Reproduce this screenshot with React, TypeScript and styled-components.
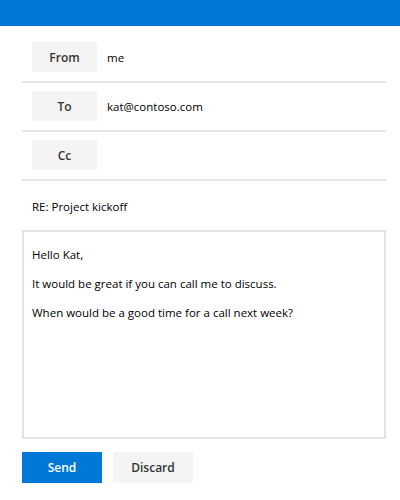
import React from 'react';
import styled, { createGlobalStyle } from 'styled-components';

const GlobalStyle = createGlobalStyle`
  body {
    margin: 0;
    background: #ffffff;
    font-family: 'Open Sans', 'Noto Sans', sans-serif;
    color: #000000;
  }
`;

const Page = styled.div`
  width: 400px;
  height: 500px;
  display: flex;
  flex-direction: column;
  background: #ffffff;
`;

const TopBar = styled.div`
  height: 26px;
  background: #0078d7;
  flex-shrink: 0;
`;

const Form = styled.form`
  display: flex;
  flex-direction: column;
  padding: 8px 14px 0 22px;
`;

const FieldRow = styled.div`
  display: flex;
  align-items: center;
  gap: 10px;
  padding: 8px 0 9px 10px;
  border-bottom: 2px solid #e6e6e6;
`;

const FieldLabel = styled.button`
  width: 65px;
  height: 30px;
  border: none;
  background: #f4f4f4;
  font-family: inherit;
  font-size: 12px;
  font-weight: 600;
  color: #333333;
  padding: 0;
`;

const FieldValue = styled.span`
  font-size: 11.5px;
  color: #000000;
`;

const Subject = styled.div`
  padding: 17px 10px 14px;
  font-size: 11.5px;
  line-height: 18px;
`;

const Body = styled.div`
  height: 209px;
  border: 2px solid #e3e3e3;
  padding: 14px 8px;
  box-sizing: border-box;
  display: flex;
  flex-direction: column;
  gap: 11px;
`;

const Para = styled.p`
  margin: 0;
  font-size: 11.5px;
  line-height: 18px;
`;

const Actions = styled.div`
  display: flex;
  gap: 11px;
  margin-top: 13px;
`;

const ActionButton = styled.button<{ $primary?: boolean }>`
  width: 80px;
  height: 31px;
  border: none;
  padding: 0;
  font-family: inherit;
  font-size: 12px;
  font-weight: 600;
  background: ${(p) => (p.$primary ? '#0078d7' : '#f4f4f4')};
  color: ${(p) => (p.$primary ? '#ffffff' : '#333333')};
`;

const fields = [
  { label: 'From', value: 'me' },
  { label: 'To', value: 'kat@contoso.com' },
  { label: 'Cc', value: '' },
];

export default function App() {
  return (
    <Page>
      <GlobalStyle />
      <TopBar />
      <Form onSubmit={(e) => e.preventDefault()}>
        {fields.map((f) => (
          <FieldRow key={f.label}>
            <FieldLabel type="button">{f.label}</FieldLabel>
            <FieldValue>{f.value}</FieldValue>
          </FieldRow>
        ))}
        <Subject>RE: Project kickoff</Subject>
        <Body>
          <Para>Hello Kat,</Para>
          <Para>It would be great if you can call me to discuss.</Para>
          <Para>When would be a good time for a call next week?</Para>
        </Body>
        <Actions>
          <ActionButton type="button" $primary>
            Send
          </ActionButton>
          <ActionButton type="button">Discard</ActionButton>
        </Actions>
      </Form>
    </Page>
  );
}
